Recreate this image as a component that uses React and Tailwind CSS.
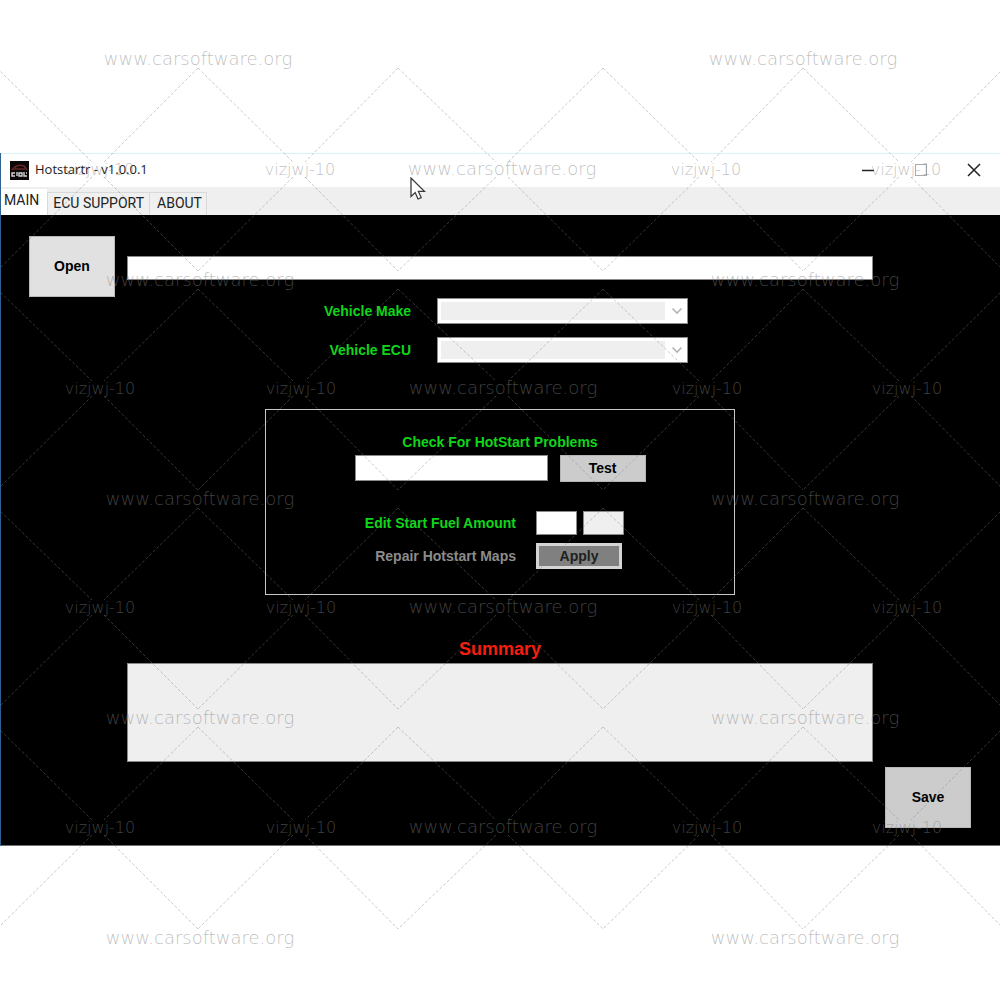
import React from "react";

const SITE = "www.carsoftware.org";
const CODE = "vizjwj-10";

const SITE_ROWS = [59, 280, 499, 718, 938];
const MIXED_ROWS = [169, 388, 607, 827];
const SITE_COLS = [198, 803];
const PEAK_COLS = [-3, 198, 398, 603, 803, 1004];
const CROSS_COLS = [98, 299, 502, 705, 905];

function Watermark() {
  const lines = [];
  MIXED_ROWS.forEach((y, r) => {
    CROSS_COLS.forEach((x, c) => {
      const left = PEAK_COLS[c];
      const right = PEAK_COLS[c + 1];
      const top = SITE_ROWS[r] + 9;
      const bottom = SITE_ROWS[r + 1] - 9;
      lines.push([left, top, x - 6, y - 7]);
      lines.push([right, top, x + 6, y - 7]);
      lines.push([x - 6, y + 8, left, bottom]);
      lines.push([x + 6, y + 8, right, bottom]);
    });
  });
  const sites = [];
  const codes = [];
  SITE_ROWS.forEach((y, i) =>
    SITE_COLS.forEach((x) => sites.push([i ? x + 2 : x, y]))
  );
  MIXED_ROWS.forEach((y, i) => {
    CROSS_COLS.forEach((x, c) =>
      (c === 2 ? sites : codes).push([i ? x + 1 : x, y])
    );
  });
  return (
    <svg
      className="pointer-events-none absolute left-0 top-0"
      width="1000"
      height="1000"
      viewBox="0 0 1000 1000"
      aria-hidden="true"
    >
      <g stroke="#808080" strokeOpacity="0.42" strokeDasharray="3 2">
        {lines.map(([x1, y1, x2, y2], i) => (
          <line key={i} x1={x1} y1={y1} x2={x2} y2={y2} />
        ))}
      </g>
      <g
        className="font-['DejaVu_Sans_Light','DejaVu_Sans',sans-serif] font-extralight"
        fill="#808080"
        fillOpacity="0.5"
        textAnchor="middle"
      >
        {sites.map(([x, y], i) => (
          <text key={i} x={x} y={y + 6} className="text-[18px]">
            {SITE}
          </text>
        ))}
        {codes.map(([x, y], i) => (
          <text key={i} x={x + 1} y={y + 6} className="text-[16px]">
            {CODE}
          </text>
        ))}
      </g>
    </svg>
  );
}

function AppIcon() {
  return (
    <svg width="19" height="19" viewBox="0 0 19 19" aria-hidden="true">
      <rect width="19" height="19" fill="#0c0808" />
      <path d="M2 9 L5 6 Q9 3 14 5 L17 9" fill="none" stroke="#6b2626" strokeWidth="1.6" />
      <path d="M4 8 H15" stroke="#4a1c1c" strokeWidth="2" />
      <path
        d="M5 12 H2 V15 H5 M7 11 V15 M9 12 H12 V15 H9 Z M14 11 V15 H17 M16 12 H17"
        fill="none"
        stroke="#d6d6d6"
        strokeWidth="1.4"
      />
    </svg>
  );
}

function Cursor() {
  return (
    <svg
      className="pointer-events-none absolute left-[409px] top-[24px]"
      width="16"
      height="24"
      viewBox="0 0 16 24"
      aria-hidden="true"
    >
      <path
        d="M1 1 V19.5 L5.2 15.5 L8 22 L11.2 20.6 L8.4 14.4 H14.4 Z"
        fill="#fff"
        stroke="#3c3c3c"
        strokeWidth="1.3"
      />
    </svg>
  );
}

function TitleBar() {
  return (
    <header className="flex h-[34px] items-center border-t border-[#d8f4fa] bg-white pb-px pl-[9px] text-[#1a1a1a]">
      <AppIcon />
      <h1 className="ml-[6px] flex-1 font-['Open_Sans',sans-serif] text-[13px]">
        Hotstartr - v1.0.0.1
      </h1>
      <button type="button" aria-label="Minimize" className="flex w-[53px] justify-center">
        <svg width="14" height="14" viewBox="0 0 14 14">
          <path d="M1 7.5 H13" stroke="#222" strokeWidth="1.5" />
        </svg>
      </button>
      <button type="button" aria-label="Maximize" className="flex w-[53px] justify-center">
        <svg width="14" height="14" viewBox="0 0 14 14">
          <rect x="1.5" y="1.5" width="11" height="11" fill="none" stroke="#aaa" />
        </svg>
      </button>
      <button type="button" aria-label="Close" className="flex w-[53px] justify-center">
        <svg width="14" height="14" viewBox="0 0 14 14">
          <path d="M1 1 L13 13 M13 1 L1 13" stroke="#222" strokeWidth="1.5" />
        </svg>
      </button>
    </header>
  );
}

function Tabs() {
  const idle =
    "h-[23px] border border-b-0 border-[#d9d9d9] bg-[#f0f0f0] pb-[2px]";
  return (
    <div
      role="tablist"
      className="flex items-end bg-[#efefef] pt-[2px] font-[Roboto,sans-serif] text-[14px] leading-5 text-[#222]"
    >
      <button type="button" role="tab" aria-selected="true" className="h-[26px] bg-white pb-1 pl-[3px] pr-2">
        MAIN
      </button>
      <button type="button" role="tab" aria-selected="false" className={`${idle} px-[5px]`}>
        ECU SUPPORT
      </button>
      <button type="button" role="tab" aria-selected="false" className={`${idle} border-l-0 pl-[7px] pr-1`}>
        ABOUT
      </button>
    </div>
  );
}

function VehicleSelect({ id, label }) {
  return (
    <>
      <label htmlFor={id} className="text-right">
        {label}
      </label>
      <div className="relative border border-[#8a8a8a]">
        <select
          id={id}
          disabled
          className="block h-6 w-full appearance-none border-[3px] border-r-[22px] border-white bg-[#efefef] opacity-100"
        />
        <svg
          className="pointer-events-none absolute right-[4px] top-[8px]"
          width="12"
          height="8"
          viewBox="0 0 12 8"
          aria-hidden="true"
        >
          <path d="M1.5 1.5 L6 6 L10.5 1.5" fill="none" stroke="#b4b4b4" strokeWidth="1.6" />
        </svg>
      </div>
    </>
  );
}

function HotStartPanel() {
  return (
    <section className="mx-auto mt-[46px] w-[470px] border border-[#c8c8c8] pb-[25px] pt-5">
      <label htmlFor="check" className="block text-center leading-6">
        Check For HotStart Problems
      </label>
      <div className="mt-px flex justify-center gap-3">
        <input id="check" className="h-[26px] w-[193px] border border-[#8a8a8a] bg-white px-1 text-black" />
        <button type="button" className="h-[27px] w-[86px] border border-[#b5b5b5] bg-[#cccccc] pb-px text-black">
          Test
        </button>
      </div>
      <div className="mt-[29px] grid grid-cols-[250px_auto] justify-start gap-x-5 gap-y-2">
        <label htmlFor="fuel" className="self-center text-right">
          Edit Start Fuel Amount
        </label>
        <div className="flex gap-[6px]">
          <input id="fuel" className="h-6 w-[41px] border border-[#8a8a8a] bg-white px-1 text-black" />
          <input
            aria-label="Fuel amount result"
            readOnly
            className="h-6 w-[41px] border border-[#8a8a8a] bg-[#efefef] px-1 text-black"
          />
        </div>
        <span className="self-center text-right text-[#8c8c8c]">Repair Hotstart Maps</span>
        <button
          type="button"
          className="h-[26px] w-[86px] border-[3px] border-[#d4d4d4] bg-[#808080] leading-5 text-[#202020]"
        >
          Apply
        </button>
      </div>
    </section>
  );
}

export default function App() {
  return (
    <div className="relative min-h-screen overflow-x-hidden bg-white pt-[153px]">
      <div className="relative border-l border-[#2f6291] font-['Liberation_Sans',Arial,sans-serif] text-[14px] font-bold">
        <div className="font-normal">
          <TitleBar />
          <Tabs />
        </div>
        <main className="grid grid-cols-[86px_1fr_86px] gap-x-3 border-b border-[#707070] bg-black pb-[17px] pl-7 pr-[29px] pt-[21px] text-[#0fd61a]">
          <button type="button" className="h-[61px] border border-[#b8b8b8] bg-[#e1e1e1] text-black">
            Open
          </button>
          <input
            aria-label="File path"
            className="mt-[3px] h-6 w-full self-center border border-[#8a8a8a] bg-white px-1 text-black"
          />
          <div className="col-start-2">
            <div className="grid grid-cols-[auto_251px] items-center justify-center gap-x-[26px] gap-y-[13px] pl-3 pt-px">
              <VehicleSelect id="make" label="Vehicle Make" />
              <VehicleSelect id="ecu" label="Vehicle ECU" />
            </div>
            <HotStartPanel />
            <label htmlFor="summary" className="mt-10 block text-center text-[18px] leading-7 text-[#f51d0e]">
              Summary
            </label>
            <textarea
              id="summary"
              readOnly
              className="block h-[99px] w-full resize-none border border-[#8a8a8a] bg-[#efefef] p-1 text-black"
            />
          </div>
          <button
            type="button"
            className="col-start-3 row-start-3 mt-[5px] h-[61px] border border-[#b8b8b8] bg-[#cccccc] text-black"
          >
            Save
          </button>
        </main>
        <Cursor />
      </div>
      <Watermark />
    </div>
  );
}
